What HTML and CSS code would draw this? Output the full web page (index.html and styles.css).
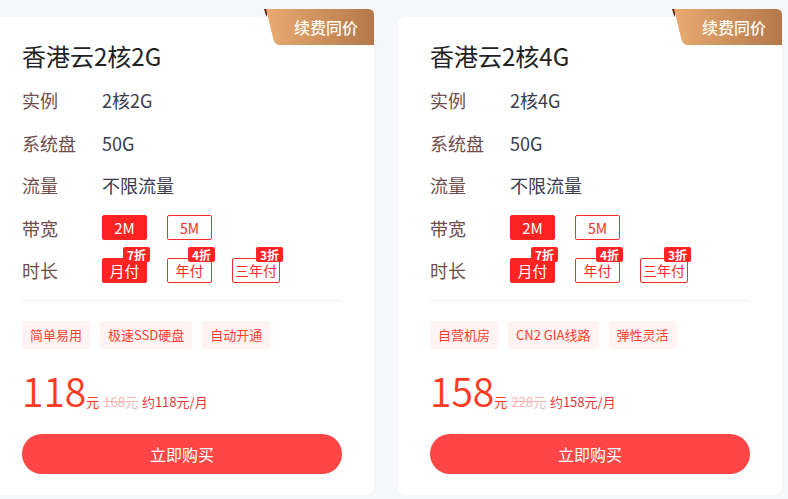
FILE: index.html
```html
<!DOCTYPE html>
<html lang="zh-CN">
<head>
<meta charset="utf-8">
<title>香港云</title>
<link rel="stylesheet" href="styles.css">
</head>
<body>
<div class="cards">
  <div class="card">
    <div class="ribbon">
      <svg class="ribbon-bg" width="110" height="36" viewBox="0 0 110 36">
        <defs>
          <linearGradient id="rg1" x1="0" y1="0" x2="1" y2="0">
            <stop offset="0" stop-color="#e9ab70"/>
            <stop offset="1" stop-color="#b4774a"/>
          </linearGradient>
        </defs>
        <polygon points="0,0 4,0 2.5,8" fill="#5e1a0c"/>
        <path d="M2,0 L104,0 Q110,0 110,6 L110,36 L16,36 Q11,36 9.6,31 Z" fill="url(#rg1)"/>
      </svg>
      <span class="ribbon-text">续费同价</span>
    </div>
    <h2 class="title">香港云2核2G</h2>
    <div class="spec"><span class="label">实例</span><span class="value">2核2G</span></div>
    <div class="spec"><span class="label">系统盘</span><span class="value">50G</span></div>
    <div class="spec"><span class="label">流量</span><span class="value">不限流量</span></div>
    <div class="spec"><span class="label">带宽</span>
      <div class="opts"><span class="opt active">2M</span><span class="opt">5M</span></div>
    </div>
    <div class="spec"><span class="label">时长</span>
      <div class="opts">
        <span class="opt active">月付<em class="off">7折</em></span>
        <span class="opt">年付<em class="off">4折</em></span>
        <span class="opt">三年付<em class="off">3折</em></span>
      </div>
    </div>
    <div class="divider"></div>
    <div class="tags"><span class="tag">简单易用</span><span class="tag">极速SSD硬盘</span><span class="tag">自动开通</span></div>
    <div class="price"><span class="num">118</span><span class="unit">元</span><span class="orig">168元</span><span class="month">约118元/月</span></div>
    <div class="buy">立即购买</div>
  </div>
  <div class="card">
    <div class="ribbon">
      <svg class="ribbon-bg" width="110" height="36" viewBox="0 0 110 36">
        <defs>
          <linearGradient id="rg2" x1="0" y1="0" x2="1" y2="0">
            <stop offset="0" stop-color="#e9ab70"/>
            <stop offset="1" stop-color="#b4774a"/>
          </linearGradient>
        </defs>
        <polygon points="0,0 4,0 2.5,8" fill="#5e1a0c"/>
        <path d="M2,0 L104,0 Q110,0 110,6 L110,36 L16,36 Q11,36 9.6,31 Z" fill="url(#rg2)"/>
      </svg>
      <span class="ribbon-text">续费同价</span>
    </div>
    <h2 class="title">香港云2核4G</h2>
    <div class="spec"><span class="label">实例</span><span class="value">2核4G</span></div>
    <div class="spec"><span class="label">系统盘</span><span class="value">50G</span></div>
    <div class="spec"><span class="label">流量</span><span class="value">不限流量</span></div>
    <div class="spec"><span class="label">带宽</span>
      <div class="opts"><span class="opt active">2M</span><span class="opt">5M</span></div>
    </div>
    <div class="spec"><span class="label">时长</span>
      <div class="opts">
        <span class="opt active">月付<em class="off">7折</em></span>
        <span class="opt">年付<em class="off">4折</em></span>
        <span class="opt">三年付<em class="off">3折</em></span>
      </div>
    </div>
    <div class="divider"></div>
    <div class="tags"><span class="tag">自营机房</span><span class="tag">CN2 GIA线路</span><span class="tag">弹性灵活</span></div>
    <div class="price"><span class="num">158</span><span class="unit">元</span><span class="orig">228元</span><span class="month">约158元/月</span></div>
    <div class="buy">立即购买</div>
  </div>
</div>
</body>
</html>
```
FILE: styles.css
```css
* { box-sizing: border-box; }
html, body { margin: 0; padding: 0; }
body {
  background: #f5f7fa;
  font-family: "Noto Sans CJK SC", "Noto Sans", sans-serif;
  width: 788px;
  height: 499px;
  overflow: hidden;
}
.cards {
  display: flex;
  gap: 24px;
  padding-top: 17px;
  margin-left: -10px;
}
.card {
  position: relative;
  width: 384px;
  flex: none;
  background: #fff;
  border-radius: 8px;
  padding: 23px 32px 21px;
}
.ribbon {
  position: absolute;
  top: -8px;
  right: 0;
  width: 110px;
  height: 36px;
}
.ribbon-bg { position: absolute; left: 0; top: 0; display: block; }
.ribbon-text {
  position: relative;
  display: block;
  padding-left: 30px;
  line-height: 36px;
  font-size: 16px;
  font-weight: 500;
  color: #fffaf2;
}
.title {
  margin: 0 0 7px;
  font-size: 24px;
  line-height: 32px;
  font-weight: 400;
  color: #222;
}
.spec {
  display: flex;
  align-items: center;
  height: 42.5px;
}
.label {
  width: 80px;
  font-size: 18px;
  color: #704c4c;
}
.value {
  font-size: 18px;
  color: #3b3b4f;
}
.opts { display: flex; gap: 20px; }
.opt {
  position: relative;
  min-width: 45px;
  height: 25px;
  padding: 0 2px;
  border: 1px solid #ff2a2a;
  border-radius: 2px;
  color: #ff2a2a;
  font-size: 14px;
  display: flex;
  align-items: center;
  justify-content: center;
}
.opt.active { background: #ff2323; border-color: #ff2323; color: #fff; font-size: 15px; }
.off {
  position: absolute;
  top: -12px;
  right: -4px;
  height: 15px;
  line-height: 15px;
  padding: 0 4px;
  background: #ff2323;
  color: #fff;
  font-size: 12px;
  font-weight: 700;
  font-style: normal;
  border-radius: 2px;
}
.divider {
  margin-top: 8.5px;
  height: 1px;
  background: #edf1f7;
}
.tags {
  display: flex;
  gap: 10px;
  margin-top: 20px;
}
.tag {
  height: 28px;
  line-height: 28px;
  padding: 0 8px;
  background: #fff4f3;
  border-radius: 3px;
  color: #ff3d2e;
  font-size: 13px;
}
.price {
  display: flex;
  align-items: baseline;
  margin-top: 17px;
  height: 48px;
  line-height: 48px;
}
.num { font-size: 39px; font-weight: 350; color: #ff3a22; }
.unit { font-size: 13px; color: #ff3a22; }
.orig { font-size: 13px; color: #f7b5b5; text-decoration: line-through; margin-left: 4px; }
.month { font-size: 13px; color: #e23a3a; margin-left: 4px; }
.buy {
  margin-top: 20px;
  height: 40px;
  line-height: 40px;
  border-radius: 20px;
  background: #ff4545;
  color: #fff;
  font-size: 16px;
  text-align: center;
}
```
